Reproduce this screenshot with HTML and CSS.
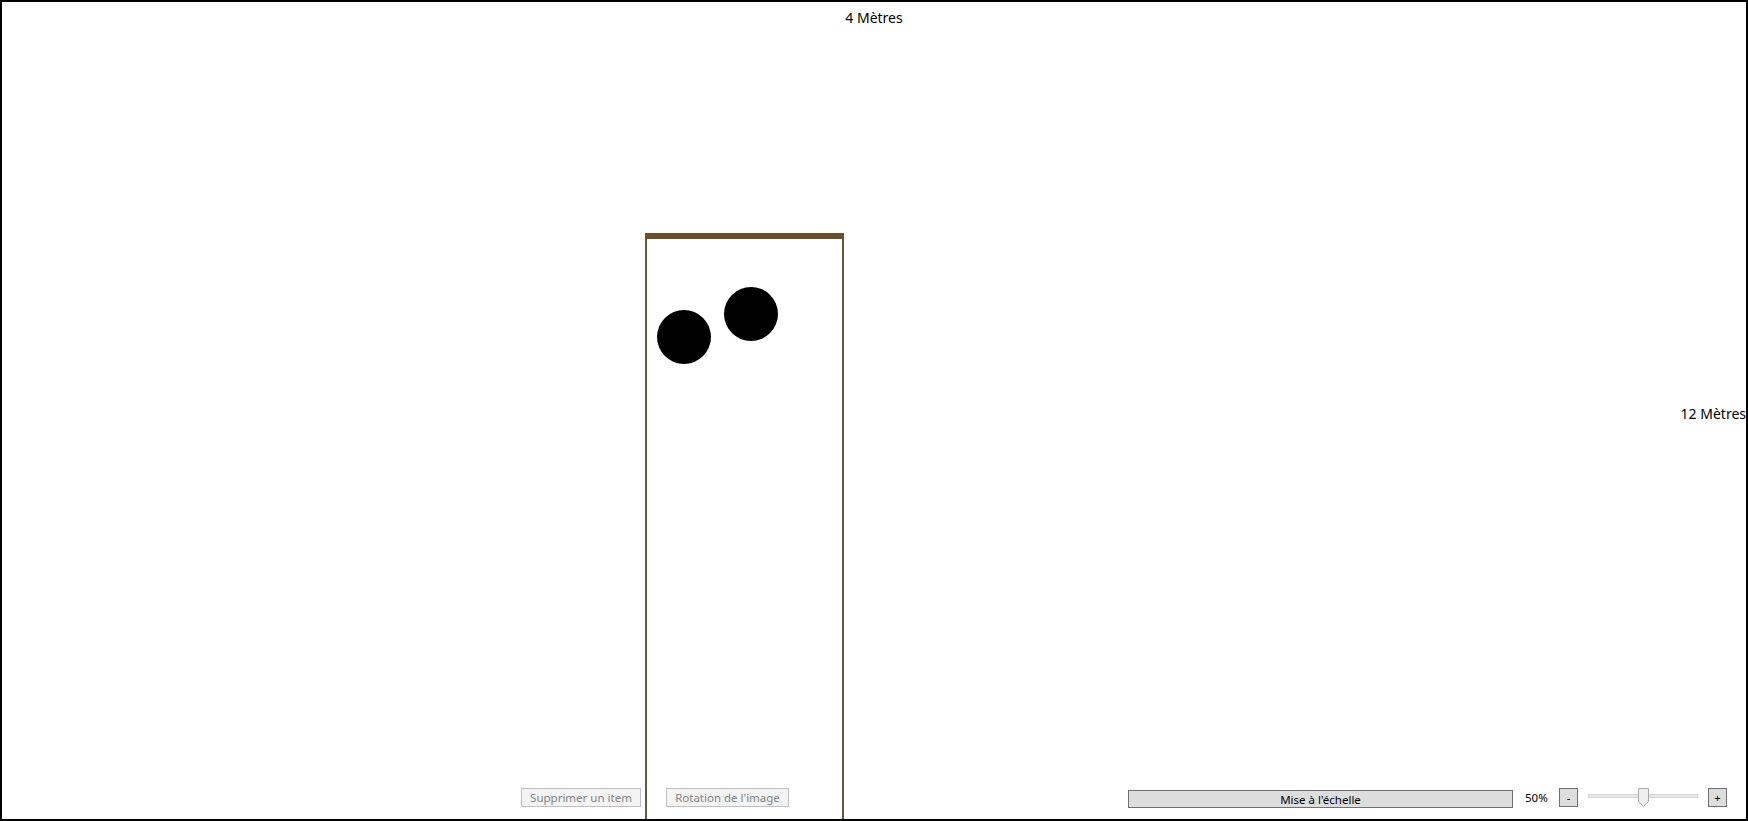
FILE: index.html
```html
<!DOCTYPE html>
<html lang="fr">
<head>
<meta charset="utf-8">
<title>Plan</title>
<link rel="stylesheet" href="styles.css">
</head>
<body>
<div class="window">
  <div class="label-top">4 Mètres</div>
  <div class="label-right">12 Mètres</div>
  <div class="room">
    <div class="dot dot-a"></div>
    <div class="dot dot-b"></div>
  </div>
  <div class="toolbar">
    <button class="btn btn-disabled btn-delete">Supprimer un item</button>
    <button class="btn btn-disabled btn-rotate">Rotation de l'image</button>
    <button class="btn btn-scale">Mise à l'échelle</button>
    <span class="zoom-value">50%</span>
    <button class="btn btn-small">-</button>
    <div class="slider">
      <div class="track"></div>
      <svg class="thumb" width="11" height="19" viewBox="0 0 11 19">
        <polygon points="0.5,0.5 10.5,0.5 10.5,13.5 5.5,18.5 0.5,13.5" fill="#efefef" stroke="#a8a8a8" stroke-width="1"/>
      </svg>
    </div>
    <button class="btn btn-small">+</button>
  </div>
</div>
</body>
</html>
```
FILE: styles.css
```css
html, body {
  margin: 0;
  padding: 0;
  background: #ffffff;
}

body {
  font-family: "Noto Sans", "Open Sans", sans-serif;
  color: #000000;
}

.window {
  position: relative;
  box-sizing: border-box;
  width: 1748px;
  height: 821px;
  border: 2px solid #000000;
  overflow: hidden;
  background: #ffffff;
}

.label-top {
  text-align: center;
  font-size: 14px;
  line-height: 20px;
  padding-top: 6px;
}

.label-right {
  position: absolute;
  right: 0;
  top: 402px;
  font-size: 14px;
  line-height: 20px;
}

.room {
  position: absolute;
  left: 643px;
  top: 231px;
  width: 195px;
  height: 640px;
  border-left: 2px solid #6f5332;
  border-right: 2px solid #6f5332;
  border-top: 6px solid #6b4e2c;
}

.dot {
  position: absolute;
  width: 54px;
  height: 54px;
  border-radius: 50%;
  background: #000000;
}

.dot-a {
  left: 10px;
  top: 71px;
}

.dot-b {
  left: 77px;
  top: 48px;
}

.toolbar {
  position: absolute;
  left: 0;
  right: 0;
  bottom: 12px;
  height: 19px;
  display: flex;
  align-items: center;
  padding-left: 519px;
}

.btn {
  box-sizing: border-box;
  height: 19px;
  padding: 0;
  margin: 0;
  font-family: "Noto Sans", "Open Sans", sans-serif;
  font-size: 11.5px;
  line-height: 17px;
  border: 1px solid #adadad;
  background: #f4f4f4;
  color: #000000;
}

.btn-disabled {
  color: #838383;
  border-color: #bfbfbf;
}

.btn-delete {
  width: 120px;
}

.btn-rotate {
  width: 123px;
  margin-left: 25px;
}

.btn-scale {
  width: 385px;
  height: 18px;
  margin-left: 339px;
  margin-top: 2px;
  background: #dddddd;
  border-color: #707070;
}

.zoom-value {
  margin-left: 12px;
  font-size: 11.5px;
  width: 23px;
}

.btn-small {
  width: 19px;
  margin-left: 11px;
  background: #dddddd;
  border-color: #707070;
  font-size: 11px;
}

.slider {
  position: relative;
  width: 110px;
  height: 19px;
  margin-left: 10px;
  margin-right: 10px;
}

.slider + .btn-small {
  margin-left: 0;
}

.track {
  position: absolute;
  left: 0;
  right: 0;
  top: 6px;
  height: 4px;
  box-sizing: border-box;
  background: #e7e7e7;
  border: 1px solid #d6d6d6;
}

.thumb {
  position: absolute;
  left: 50px;
  top: 0;
}
```
